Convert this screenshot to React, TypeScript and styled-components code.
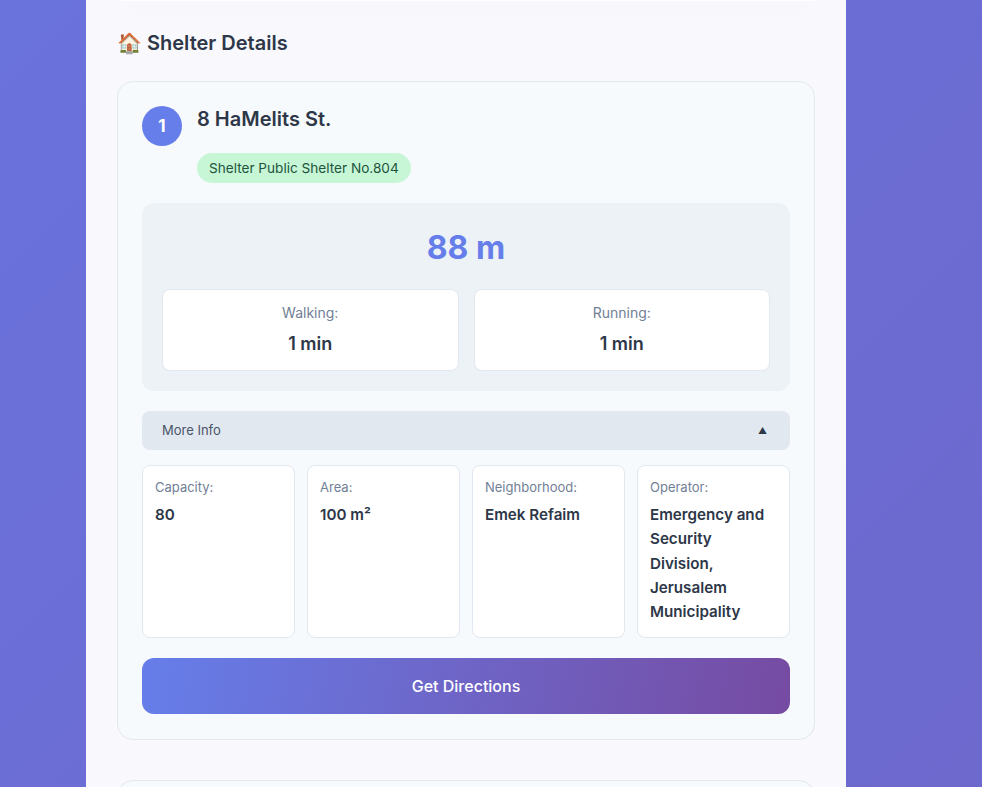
import styled, { createGlobalStyle } from "styled-components";

const GlobalStyle = createGlobalStyle`
    html, body {
        margin: 0;
        padding: 0;
    }
    body {
        font-family: Inter, "Noto Sans", "Liberation Sans", sans-serif;
        background: linear-gradient(135deg, #6a72dc 0%, #6d68cc 100%);
        min-height: 787px;
        overflow: hidden;
    }
`

const Page = styled.div`
    display: flex;
    min-height: 787px;
    padding-left: 86px;
`

const Panel = styled.main`
    width: 760px;
    background: #f8f8fd;
    padding: 0 31px 40px;
    box-sizing: border-box;
`

const PrevCard = styled.div`
    height: 1px;
    margin: 0 -2px 0 1px;
    background: #ffffff;
    border-radius: 0 0 16px 16px;
    box-shadow: 0 6px 22px rgba(0, 0, 0, 0.12);
`

const SectionTitle = styled.h2`
    margin: 27px 0 23px;
    font-size: 20px;
    line-height: 30px;
    font-weight: 600;
    color: #2d3748;
`

const List = styled.div`
    display: flex;
    flex-direction: column;
    gap: 40px;
`

const Card = styled.section`
    background: #f7fafc;
    border: 1px solid #e2e8f0;
    border-radius: 16px;
    padding: 24px 24px 25px;
`

const Header = styled.div`
    display: flex;
    gap: 15px;
    margin-bottom: 20px;
`

const Number = styled.div`
    flex: none;
    width: 40px;
    height: 40px;
    border-radius: 50%;
    background: #667eea;
    color: #fff;
    font-weight: 700;
    font-size: 17px;
    display: flex;
    align-items: center;
    justify-content: center;
`

const Info = styled.div`
    display: flex;
    flex-direction: column;
    align-items: flex-start;
`

const Address = styled.h3`
    margin: -2px 0 19px;
    font-size: 20px;
    line-height: 30px;
    font-weight: 600;
    color: #2d3748;
`

const Badge = styled.span`
    background: #c6f6d5;
    color: #22543d;
    font-size: 13.6px;
    line-height: 18px;
    padding: 6px 12px;
    border-radius: 15px;
`

const DistanceBox = styled.div`
    background: #edf2f7;
    border-radius: 12px;
    padding: 20px;
`

const Distance = styled.div`
    text-align: center;
    font-size: 32px;
    line-height: 50px;
    font-weight: 700;
    color: #667eea;
    margin-bottom: 16px;
`

const TimeGrid = styled.div`
    display: grid;
    grid-template-columns: 1fr 1fr;
    gap: 15px;
`

const TimeBox = styled.div`
    background: #fff;
    border: 1px solid #e2e8f0;
    border-radius: 8px;
    padding: 14px;
    text-align: center;
`

const TimeLabel = styled.div`
    font-size: 14px;
    line-height: 18px;
    color: #718096;
    margin-bottom: 10px;
`

const TimeValue = styled.div`
    font-size: 18px;
    line-height: 24px;
    font-weight: 600;
    color: #2d3748;
`

const Toggle = styled.div`
    margin-top: 20px;
    background: #e2e8f0;
    border-radius: 8px;
    padding: 10px 20px;
    display: flex;
    justify-content: space-between;
    align-items: center;
    font-size: 13px;
    line-height: 19px;
    color: #4a5568;
`

const Arrow = styled.span`
    font-size: 9px;
    color: #2d3748;
    margin-right: 3px;
`

const DetailGrid = styled.div`
    margin-top: 15px;
    display: grid;
    grid-template-columns: repeat(4, 1fr);
    gap: 12px;
`

const Detail = styled.div`
    background: #fff;
    border: 1px solid #e2e8f0;
    border-radius: 8px;
    padding: 12px;
`

const DetailLabel = styled.div`
    font-size: 13px;
    line-height: 18px;
    color: #718096;
    margin-bottom: 7px;
`

const DetailValue = styled.div`
    font-size: 15.2px;
    line-height: 1.6;
    font-weight: 600;
    color: #2d3748;
`

const Button = styled.button`
    display: block;
    width: 100%;
    margin-top: 20px;
    border: none;
    border-radius: 12px;
    padding: 18px;
    font-family: inherit;
    font-size: 16px;
    line-height: 20px;
    font-weight: 500;
    color: #fff;
    background: linear-gradient(100deg, #667eea 0%, #764ba2 100%);
    cursor: pointer;
`

const NextCard = styled.section`
    height: 60px;
    background: #f7fafc;
    border: 1px solid #e2e8f0;
    border-radius: 16px;
`

const details = [
    { label: "Capacity:", value: "80" },
    { label: "Area:", value: "100 m²" },
    { label: "Neighborhood:", value: "Emek Refaim" },
    { label: "Operator:", value: "Emergency and Security Division, Jerusalem Municipality" },
]

function App() {
    return (
        <>
            <GlobalStyle />
            <Page>
                <Panel>
                    <PrevCard />
                    <SectionTitle>🏠 Shelter Details</SectionTitle>
                    <List>
                        <Card>
                            <Header>
                                <Number>1</Number>
                                <Info>
                                    <Address>8 HaMelits St.</Address>
                                    <Badge>Shelter Public Shelter No.804</Badge>
                                </Info>
                            </Header>
                            <DistanceBox>
                                <Distance>88 m</Distance>
                                <TimeGrid>
                                    <TimeBox>
                                        <TimeLabel>Walking:</TimeLabel>
                                        <TimeValue>1 min</TimeValue>
                                    </TimeBox>
                                    <TimeBox>
                                        <TimeLabel>Running:</TimeLabel>
                                        <TimeValue>1 min</TimeValue>
                                    </TimeBox>
                                </TimeGrid>
                            </DistanceBox>
                            <Toggle>
                                <span>More Info</span>
                                <Arrow>▲</Arrow>
                            </Toggle>
                            <DetailGrid>
                                {details.map((d) => (
                                    <Detail key={d.label}>
                                        <DetailLabel>{d.label}</DetailLabel>
                                        <DetailValue>{d.value}</DetailValue>
                                    </Detail>
                                ))}
                            </DetailGrid>
                            <Button>Get Directions</Button>
                        </Card>
                        <NextCard />
                    </List>
                </Panel>
            </Page>
        </>
    );
}

export default App;
